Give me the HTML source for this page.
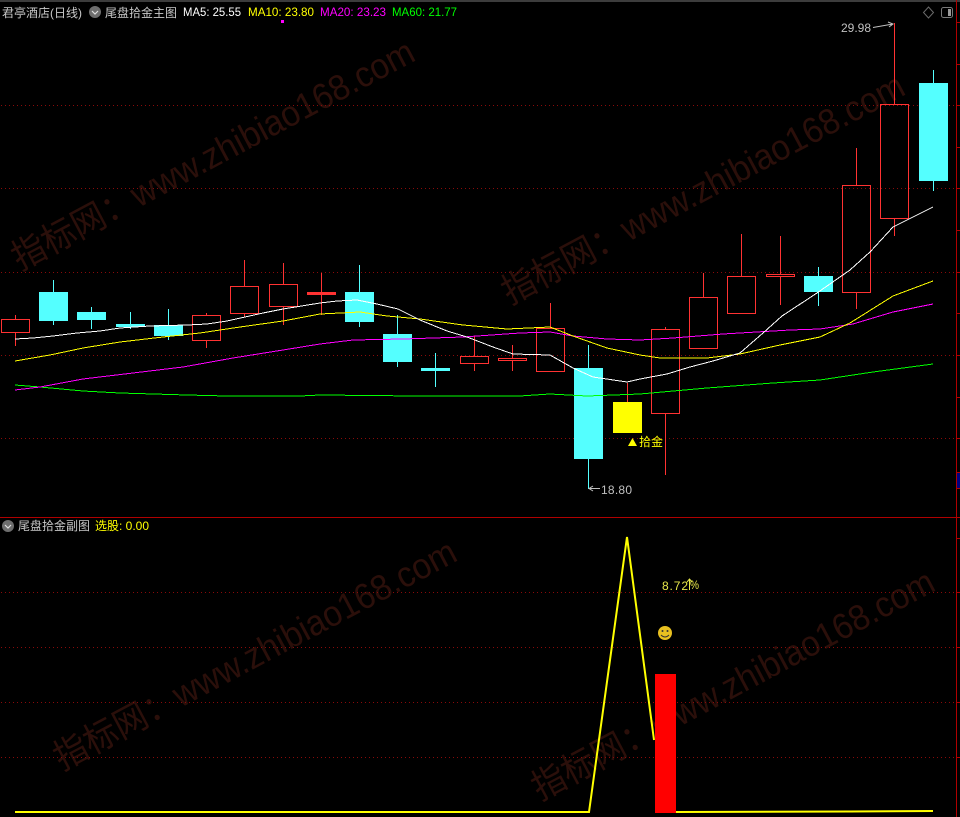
<!DOCTYPE html>
<html><head><meta charset="utf-8">
<style>
html,body{margin:0;padding:0;background:#000;}
body{width:960px;height:817px;overflow:hidden;position:relative;}
svg{position:absolute;left:0;top:0;}
.t{font-family:"Liberation Sans","WenQuanYi Zen Hei","Noto Sans CJK SC",sans-serif;font-size:12px;}
.wm{font-family:"Liberation Sans","Noto Sans CJK SC",sans-serif;font-size:36px;fill:#2b0f0a;}
</style></head>
<body>
<svg width="960" height="817" viewBox="0 0 960 817" xmlns="http://www.w3.org/2000/svg">
<rect width="960" height="817" fill="#000"/>
<rect x="0" y="0" width="960" height="2" fill="#3c3c3c"/>
<!-- watermarks -->
<text class="wm" transform="translate(20,271) rotate(-28)" textLength="450" lengthAdjust="spacingAndGlyphs">指标网：www.zhibiao168.com</text>
<text class="wm" transform="translate(510,305) rotate(-28)" textLength="450" lengthAdjust="spacingAndGlyphs">指标网：www.zhibiao168.com</text>
<text class="wm" transform="translate(62,771) rotate(-28)" textLength="450" lengthAdjust="spacingAndGlyphs">指标网：www.zhibiao168.com</text>
<text class="wm" transform="translate(540,801) rotate(-28)" textLength="450" lengthAdjust="spacingAndGlyphs">指标网：www.zhibiao168.com</text>
<!-- grid -->
<g stroke="#8a0a0a" stroke-width="1" stroke-dasharray="1 3" shape-rendering="crispEdges">
<path d="M1 105.5H956M1 188.5H956M1 272.5H956M1 355.5H956M1 438.5H956M1 592.5H956M1 647.5H956M1 702.5H956M1 757.5H956"/>
</g>
<g stroke="#b00000" stroke-width="1" fill="none" shape-rendering="crispEdges">
<path d="M0 517.5H960"/>
<path d="M956.5 0V817"/>
<path d="M956 22.5H960M956 64.5H960M956 105.5H960M956 147.5H960M956 188.5H960M956 230.5H960M956 272.5H960M956 313.5H960M956 355.5H960M956 397.5H960M956 438.5H960M956 472.5H960M956 488.5H960M956 517.5H960M956 538.5H960M956 592.5H960M956 647.5H960M956 702.5H960M956 757.5H960"/>
</g>
<rect x="957" y="473" width="3" height="15" fill="#000080"/>
<!-- wicks and candles -->
<g stroke="#ff3232" stroke-width="1" fill="none" shape-rendering="crispEdges">
<path d="M15.5 315V319M15.5 332V346"/>
<rect x="1.5" y="319.5" width="28" height="13"/>
<path d="M206.5 313V315M206.5 341V348"/>
<rect x="192.5" y="315.5" width="28" height="25"/>
<path d="M244.5 260V286M244.5 314V317"/>
<rect x="230.5" y="286.5" width="28" height="27"/>
<path d="M283.5 263V284M283.5 306V325"/>
<rect x="269.5" y="284.5" width="28" height="22"/>
<path d="M321.5 273V315"/>
<path d="M474.5 336V356M474.5 363V371"/>
<rect x="460.5" y="356.5" width="28" height="7"/>
<path d="M512.5 345V358M512.5 361V371"/>
<rect x="498.5" y="358.5" width="28" height="2"/>
<path d="M550.5 303V328"/>
<rect x="536.5" y="328.5" width="28" height="43"/>
<path d="M627.5 383V402"/>
<path d="M665.5 327V329M665.5 414V475"/>
<rect x="651.5" y="329.5" width="28" height="84"/>
<path d="M703.5 273V297"/>
<rect x="689.5" y="297.5" width="28" height="51"/>
<path d="M741.5 234V276"/>
<rect x="727.5" y="276.5" width="28" height="37"/>
<path d="M780.5 236V274M780.5 277V305"/>
<rect x="766.5" y="274.5" width="28" height="2"/>
<path d="M856.5 148V185M856.5 292V309"/>
<rect x="842.5" y="185.5" width="28" height="107"/>
<path d="M894.5 23V104M894.5 218V236"/>
<rect x="880.5" y="104.5" width="28" height="114"/>
</g>
<rect x="307" y="292" width="29" height="3" fill="#ff3232"/>
<g stroke="#54ffff" stroke-width="1" shape-rendering="crispEdges">
<path d="M53.5 280V325M91.5 307V329M130.5 312V329M168.5 309V340M359.5 265V327M397.5 315V367M435.5 353V387M588.5 345V489M818.5 267V306M933.5 70V191"/>
</g>
<g fill="#54ffff" shape-rendering="crispEdges">
<rect x="39" y="292" width="29" height="29"/>
<rect x="77" y="312" width="29" height="8"/>
<rect x="116" y="324" width="29" height="3"/>
<rect x="154" y="325" width="29" height="11"/>
<rect x="345" y="292" width="29" height="30"/>
<rect x="383" y="334" width="29" height="28"/>
<rect x="421" y="368" width="29" height="3"/>
<rect x="574" y="368" width="29" height="91"/>
<rect x="804" y="276" width="29" height="16"/>
<rect x="919" y="83" width="29" height="98"/>
</g>
<rect x="613" y="402" width="29" height="31" fill="#ffff00"/>
<!-- MAs -->
<g fill="none" stroke-width="1" shape-rendering="crispEdges">
<polyline stroke="#00ff00" points="15,385 40,387 83,391 120,393 187,395 227,396 300,396 320,395 417,396 520,396 550,394 587,396 640,394 707,388 773,383 820,380 873,372 933,364"/>
<polyline stroke="#ff00ff" points="15,390 40,387 83,379 133,373 183,367 233,358 283,350 320,344 353,340 403,339 463,337 520,333 550,332 573,336 607,339 640,340 673,338 723,334 790,330 820,329 853,324 893,312 933,304"/>
<polyline stroke="#ffff00" points="15,361 50,355 83,348 120,342 163,337 200,333 240,327 283,321 320,314 360,312 387,316 420,319 463,325 507,329 550,327 573,336 607,348 640,355 660,358 707,358 740,354 780,345 820,337 850,323 893,296 933,281"/>
<polyline stroke="#ffffff" points="15,339 33,338 53,336 77,333 100,331 120,328 150,326 187,325 207,324 227,321 263,313 283,309 320,303 337,301 357,300 377,304 398,309 420,320 447,331 467,337 493,347 513,354 550,355 573,368 593,377 627,382 640,379 667,374 690,367 713,361 740,353 763,333 782,316 817,293 850,270 870,252 893,227 933,207"/>
</g>
<!-- magenta dot -->
<rect x="281" y="20" width="3" height="3" fill="#ff00ff"/>
<!-- labels on chart -->
<text class="t" x="841" y="32" fill="#c0c0c0" textLength="30">29.98</text>
<path d="M873 27.5L893 24M888 22L893 24L889 27" stroke="#c0c0c0" fill="none"/>
<text class="t" x="601" y="494" fill="#c0c0c0" textLength="31">18.80</text>
<path d="M600 488.5H589M593 486L589 488.5L593 491" stroke="#c0c0c0" fill="none"/>
<path d="M632.5 438L637 446H628Z" fill="#ffff00"/>
<text class="t" x="639" y="446" fill="#ffff00" textLength="24">拾金</text>
<!-- header -->
<text class="t" x="2" y="17" fill="#c8c8c8">君亭酒店(日线)</text>
<circle cx="95" cy="12" r="6" fill="#6e6e6e"/>
<path d="M92 11L95 14L98 11" stroke="#e0e0e0" stroke-width="1.2" fill="none"/>
<text class="t" x="105" y="17" fill="#c8c8c8">尾盘拾金主图</text>
<text class="t" x="183" y="16" fill="#ffffff" textLength="58" lengthAdjust="spacingAndGlyphs">MA5: 25.55</text>
<text class="t" x="248" y="16" fill="#ffff00" textLength="66" lengthAdjust="spacingAndGlyphs">MA10: 23.80</text>
<text class="t" x="320" y="16" fill="#ff00ff" textLength="66" lengthAdjust="spacingAndGlyphs">MA20: 23.23</text>
<text class="t" x="392" y="16" fill="#00ff00" textLength="65" lengthAdjust="spacingAndGlyphs">MA60: 21.77</text>
<path d="M928.5 7L933.5 12.5L928.5 18L923.5 12.5Z" stroke="#6a6a6a" fill="none"/>
<rect x="941.5" y="7.5" width="11" height="10" rx="2" stroke="#7a7a7a" fill="none"/>
<rect x="948" y="9" width="3" height="7" fill="#9a9a9a"/>
<!-- sub chart header -->
<circle cx="8" cy="526" r="6" fill="#6e6e6e"/>
<path d="M5 525L8 528L11 525" stroke="#e0e0e0" stroke-width="1.2" fill="none"/>
<text class="t" x="18" y="530" fill="#c8c8c8">尾盘拾金副图</text>
<text class="t" x="95" y="530" fill="#ffff00">选股: 0.00</text>
<!-- sub chart -->
<polyline points="15,812 589,812 627,537 654,740" fill="none" stroke="#ffff00" stroke-width="2"/>
<polyline points="676,812 850,811.5 933,811" fill="none" stroke="#ffff00" stroke-width="2"/>
<rect x="655" y="674" width="21" height="139" fill="#ff0000"/>
<text class="t" x="662" y="590" fill="#e8e84a" textLength="26">8.72</text>
<text class="t" x="690" y="589" fill="#e8e84a" textLength="9" lengthAdjust="spacingAndGlyphs">%</text>
<path d="M689.5 579V590M687 582L689.5 579L692 582" stroke="#e8e84a" fill="none"/>
<circle cx="665" cy="633" r="7" fill="#e8c020"/>
<circle cx="662.5" cy="631" r="1" fill="#333"/>
<circle cx="667.5" cy="631" r="1" fill="#333"/>
<path d="M661 635Q665 639 669 635" stroke="#333" fill="none"/>
</svg>
</body></html>
